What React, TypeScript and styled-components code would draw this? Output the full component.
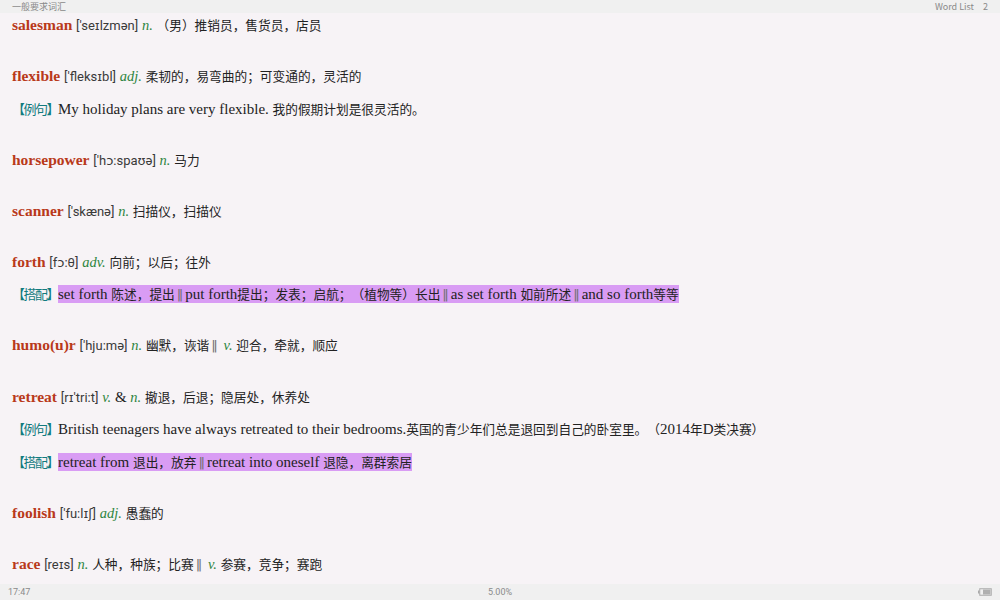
import React from "react";
import styled, { createGlobalStyle } from "styled-components";

const Global = createGlobalStyle`
  html, body { margin: 0; padding: 0; }
  body { background: #f7f3f6; }
`;

const Page = styled.div`
  width: 1000px;
  height: 600px;
  display: flex;
  flex-direction: column;
  overflow: hidden;
  background: #f7f3f6;
  font-family: "Liberation Serif", "Noto Sans CJK SC", serif;
  color: #222;
  text-spacing-trim: space-all;
`;

const TopBar = styled.header`
  height: 13px;
  flex: none;
  background: #f0f0f0;
  display: flex;
  align-items: center;
  justify-content: space-between;
  padding: 0 12px;
  font-family: "Noto Sans CJK SC", "Noto Sans", sans-serif;
  font-size: 9px;
  color: #8a8a8a;
  line-height: 1;
`;

const PageNo = styled.span`
  margin-left: 9px;
`;

const Content = styled.main`
  flex: 1;
  display: flex;
  flex-direction: column;
  gap: 31.1px;
  padding: 2px 12px 0;
  overflow: hidden;
`;

const Entry = styled.section`
  display: flex;
  flex-direction: column;
  gap: 12.5px;
`;

const Line = styled.div`
  height: 20px;
  line-height: 20px;
  white-space: nowrap;
  font-size: 15px;
`;

const Head = styled.span`
  font-family: "Liberation Serif", serif;
  font-weight: 700;
  font-size: 15.5px;
  color: #b9391a;
`;

const Phon = styled.span`
  font-family: Roboto, "DejaVu Sans", sans-serif;
  font-size: 13px;
  color: #3a3a3a;
`;

const Pos = styled.span`
  font-family: "Liberation Serif", serif;
  font-style: italic;
  font-size: 14.5px;
  color: #2e8540;
`;

const Zh = styled.span`
  font-family: "Noto Sans CJK SC", sans-serif;
  font-size: 12.7px;
  color: #222;
`;

const Sep = styled.span`
  font-family: "DejaVu Sans", sans-serif;
  font-size: 13px;
  margin: 0 2px;
  color: #707070;
`;

const Tag = styled.span`
  font-family: "Noto Sans CJK SC", sans-serif;
  font-size: 13px;
  letter-spacing: -1.5px;
  text-spacing-trim: normal;
  color: #127b7e;
`;

const Hl = styled.span`
  background: #d99cf4;
  padding: 1px 0;
`;

const Footer = styled.footer`
  height: 16px;
  flex: none;
  background: #f0f0f0;
  display: grid;
  grid-template-columns: 1fr auto 1fr;
  align-items: center;
  padding: 0 8px;
  font-family: Roboto, "Liberation Sans", sans-serif;
  font-size: 9px;
  color: #8a8a8a;
`;

const Progress = styled.span`
  text-align: center;
`;

const Battery = styled.span`
  justify-self: end;
  display: flex;
  align-items: center;
`;

export default function App() {
  return (
    <>
      <Global />
      <Page>
        <TopBar>
          <span>一般要求词汇</span>
          <span>
            Word List<PageNo>2</PageNo>
          </span>
        </TopBar>
        <Content>
          <Entry>
            <Line>
              <Head>salesman</Head> <Phon>['seɪlzmən]</Phon> <Pos>n.</Pos>{" "}
              <Zh>（男）推销员，售货员，店员</Zh>
            </Line>
          </Entry>
          <Entry>
            <Line>
              <Head>flexible</Head> <Phon>['fleksɪbl]</Phon> <Pos>adj.</Pos>{" "}
              <Zh>柔韧的，易弯曲的；可变通的，灵活的</Zh>
            </Line>
            <Line>
              <Tag>【例句】</Tag>My holiday plans are very flexible. <Zh>我的假期计划是很灵活的。</Zh>
            </Line>
          </Entry>
          <Entry>
            <Line>
              <Head>horsepower</Head> <Phon>['hɔ:spaʊə]</Phon> <Pos>n.</Pos> <Zh>马力</Zh>
            </Line>
          </Entry>
          <Entry>
            <Line>
              <Head>scanner</Head> <Phon>['skænə]</Phon> <Pos>n.</Pos> <Zh>扫描仪，扫描仪</Zh>
            </Line>
          </Entry>
          <Entry>
            <Line>
              <Head>forth</Head> <Phon>[fɔ:θ]</Phon> <Pos>adv.</Pos> <Zh>向前；以后；往外</Zh>
            </Line>
            <Line>
              <Tag>【搭配】</Tag>
              <Hl>
                set forth <Zh>陈述，提出</Zh>
                <Sep>‖</Sep>put forth<Zh>提出；发表；启航；（植物等）长出</Zh>
                <Sep>‖</Sep>as set forth <Zh>如前所述</Zh>
                <Sep>‖</Sep>and so forth<Zh>等等</Zh>
              </Hl>
            </Line>
          </Entry>
          <Entry>
            <Line>
              <Head>humo(u)r</Head> <Phon>['hju:mə]</Phon> <Pos>n.</Pos> <Zh>幽默，诙谐</Zh>
              <Sep>‖</Sep> <Pos>v.</Pos> <Zh>迎合，牵就，顺应</Zh>
            </Line>
          </Entry>
          <Entry>
            <Line>
              <Head>retreat</Head> <Phon>[rɪ'tri:t]</Phon> <Pos>v.</Pos> &amp; <Pos>n.</Pos>{" "}
              <Zh>撤退，后退；隐居处，休养处</Zh>
            </Line>
            <Line>
              <Tag>【例句】</Tag>British teenagers have always retreated to their bedrooms.
              <Zh>英国的青少年们总是退回到自己的卧室里。（</Zh>2014<Zh>年</Zh>D<Zh>类决赛）</Zh>
            </Line>
            <Line>
              <Tag>【搭配】</Tag>
              <Hl>
                retreat from <Zh>退出，放弃</Zh>
                <Sep>‖</Sep>retreat into oneself <Zh>退隐，离群索居</Zh>
              </Hl>
            </Line>
          </Entry>
          <Entry>
            <Line>
              <Head>foolish</Head> <Phon>['fu:lɪʃ]</Phon> <Pos>adj.</Pos> <Zh>愚蠢的</Zh>
            </Line>
          </Entry>
          <Entry>
            <Line>
              <Head>race</Head> <Phon>[reɪs]</Phon> <Pos>n.</Pos> <Zh>人种，种族；比赛</Zh>
              <Sep>‖</Sep> <Pos>v.</Pos> <Zh>参赛，竞争；赛跑</Zh>
            </Line>
          </Entry>
        </Content>
        <Footer>
          <span>17:47</span>
          <Progress>5.00%</Progress>
          <Battery>
            <svg width="14" height="8" viewBox="0 0 14 8">
              <rect x="0" y="2.5" width="1.5" height="3" fill="#aaa" />
              <rect x="1.75" y="0.75" width="11.5" height="6.5" fill="none" stroke="#aaa" strokeWidth="1" />
              <rect x="5" y="1.5" width="7.5" height="5" fill="#b0b0b0" />
            </svg>
          </Battery>
        </Footer>
      </Page>
    </>
  );
}
